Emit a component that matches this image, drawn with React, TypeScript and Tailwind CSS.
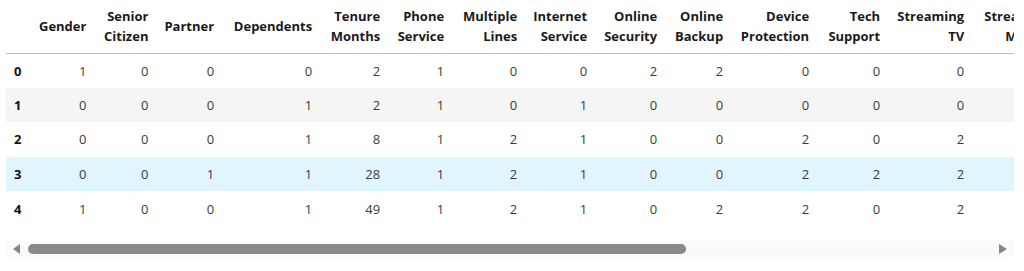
import React from 'react';

const columns: { label: [string, string?]; width: number }[] = [
  { label: ['Gender'], width: 65 },
  { label: ['Senior', 'Citizen'], width: 62 },
  { label: ['Partner'], width: 65 },
  { label: ['Dependents'], width: 98 },
  { label: ['Tenure', 'Months'], width: 68 },
  { label: ['Phone', 'Service'], width: 64 },
  { label: ['Multiple', 'Lines'], width: 73 },
  { label: ['Internet', 'Service'], width: 70 },
  { label: ['Online', 'Security'], width: 70 },
  { label: ['Online', 'Backup'], width: 66 },
  { label: ['Device', 'Protection'], width: 86 },
  { label: ['Tech', 'Support'], width: 71 },
  { label: ['Streaming', 'TV'], width: 84 },
  { label: ['Streaming', 'Movies'], width: 87 },
];

const rows: number[][] = [
  [1, 0, 0, 0, 2, 1, 0, 0, 2, 2, 0, 0, 0, 0],
  [0, 0, 0, 1, 2, 1, 0, 1, 0, 0, 0, 0, 0, 0],
  [0, 0, 0, 1, 8, 1, 2, 1, 0, 0, 2, 0, 2, 2],
  [0, 0, 1, 1, 28, 1, 2, 1, 0, 0, 2, 2, 2, 2],
  [1, 0, 0, 1, 49, 1, 2, 1, 0, 2, 2, 0, 2, 2],
];

const rowBg = (i: number) => {
  if (i === 3) return 'bg-[#e1f5fe]';
  if (i % 2 === 1) return 'bg-[#f5f5f5]';
  return 'bg-white';
};

export default function App() {
  return (
    <div className="w-[1024px] h-[271px] bg-white font-['Open_Sans',sans-serif] text-[13px] leading-5">
      <div className="ml-[6px] w-[1008px] overflow-hidden">
        <table className="table-fixed border-collapse w-max">
          <colgroup>
            <col style={{ width: 23 }} />
            {columns.map((c, i) => (
              <col key={i} style={{ width: c.width }} />
            ))}
          </colgroup>
          <thead>
            <tr className="h-[53px] border-b border-[#bdbdbd]">
              <th className="px-2" />
              {columns.map((c, i) => (
                <th
                  key={i}
                  className="px-2 text-right align-middle font-bold text-[#1a1a1a] whitespace-nowrap"
                >
                  <div>{c.label[0]}</div>
                  {c.label[1] && <div>{c.label[1]}</div>}
                </th>
              ))}
            </tr>
          </thead>
          <tbody>
            {rows.map((r, i) => (
              <tr key={i} className={`h-[34.6px] ${rowBg(i)}`}>
                <th className="px-2 text-left font-bold text-[#111]">{i}</th>
                {r.map((v, j) => (
                  <td key={j} className="px-2 text-right text-[#3a3a3a] whitespace-nowrap">
                    {v}
                  </td>
                ))}
              </tr>
            ))}
          </tbody>
        </table>
      </div>

      <div className="mt-[15px] ml-[6px] w-[1008px] h-4 bg-[#fafafa] flex items-center">
        <div className="w-[22px] flex justify-center">
          <svg width="8" height="10" viewBox="0 0 8 10">
            <path d="M7 0 L0 5 L7 10 Z" fill="#858585" />
          </svg>
        </div>
        <div className="w-[658px] h-[10px] rounded-full bg-[#8a8a8a]" />
        <div className="flex-1" />
        <div className="w-[22px] flex justify-center">
          <svg width="8" height="10" viewBox="0 0 8 10">
            <path d="M0 0 L8 5 L0 10 Z" fill="#858585" />
          </svg>
        </div>
      </div>
    </div>
  );
}
